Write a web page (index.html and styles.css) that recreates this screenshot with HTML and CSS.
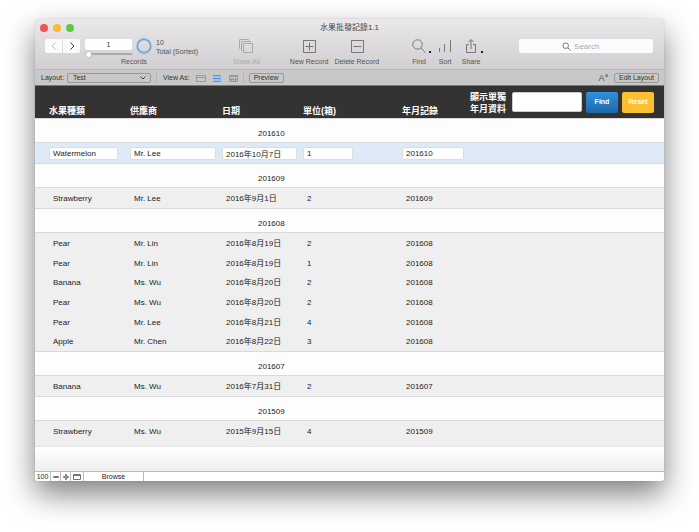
FILE: index.html
```html
<!DOCTYPE html>
<html lang="zh-Hant">
<head>
  <meta charset="UTF-8" />
  <meta name="viewport" content="width=device-width, initial-scale=1.0" />
  <title>水果批發記錄1.1</title>
  <link rel="stylesheet" href="styles.css">
</head>
<body>
  <div class="window">
    <header class="chrome">
      <div class="titlebar">
        <div class="lights">
          <button class="light close" aria-label="Close"></button>
          <button class="light minimize" aria-label="Minimize"></button>
          <button class="light zoom" aria-label="Zoom"></button>
        </div>
        <h1>水果批發記錄1.1</h1>
      </div>

      <div class="toolbar">
        <div class="records">
          <div class="records-row">
            <div class="nav">
              <button class="prev" aria-label="Previous record" disabled>
                <svg width="8" height="10" viewBox="0 0 8 10"><path d="M5.500 1.500 2 5l3.500 3.500" /></svg>
              </button>
              <button aria-label="Next record">
                <svg width="8" height="10" viewBox="0 0 8 10"><path d="M2.500 1.500 6 5 2.500 8.500" /></svg>
              </button>
            </div>
            <div class="position">
              <input type="text" class="current" value="1" aria-label="Current record" />
              <input type="range" class="slider" min="1" max="10" value="1" aria-label="Record slider" />
            </div>
            <svg class="pie" width="16" height="16" viewBox="0 0 16 16"><circle cx="8" cy="8" r="6.700" /></svg>
            <div class="count">10<br>Total (Sorted)</div>
          </div>
          <div class="caption">Records</div>
        </div>

        <button class="tool show-all" disabled>
          <svg width="16" height="16" viewBox="0 0 16 16">
            <path d="M2.500 10.500h-1v-9h9v1M4.500 12.500h-1v-9h9v1M5.500 5.500h9v9h-9z" />
          </svg>
          Show All
        </button>

        <div class="tool-group edit">
          <button class="tool">
            <svg width="16" height="16" viewBox="0 0 16 16"><path d="M2.500 2.500h12v12h-12zM8.500 4.500v8M4.500 8.500h8" /></svg>
            New Record
          </button>
          <button class="tool">
            <svg width="16" height="16" viewBox="0 0 16 16"><path d="M2.500 2.500h12v12h-12zM4.500 8.500h8" /></svg>
            Delete Record
          </button>
        </div>

        <div class="tool-group actions">
          <button class="tool">
            <svg width="24" height="16" viewBox="0 0 24 16">
              <circle cx="10.500" cy="6.500" r="4.700" /><path d="M14 10l4.500 4.500" /><path class="dot" d="M22 13h2v2h-2z" />
            </svg>
            Find
          </button>
          <button class="tool">
            <svg width="16" height="16" viewBox="0 0 16 16"><path d="M2.500 10v4M7.500 6v8M13.500 2v12" /></svg>
            Sort
          </button>
          <button class="tool">
            <svg width="24" height="16" viewBox="0 0 24 16">
              <path d="M10 6.500H7.500v8h9v-8H14M12 11V2M9.500 4 12 1.500 14.500 4" /><path class="dot" d="M22 13h2v2h-2z" />
            </svg>
            Share
          </button>
        </div>

        <label class="search">
          <svg width="9" height="9" viewBox="0 0 9 9"><circle cx="3.700" cy="3.700" r="2.800" /><path d="M5.800 5.800 8.500 8.500" /></svg>
          <input type="search" placeholder="Search" aria-label="Search" />
        </label>
      </div>
    </header>

    <div class="layout-bar">
      <label for="layout">Layout:</label>
      <div class="select">
        <select id="layout"><option>Test</option></select>
        <svg width="6" height="4" viewBox="0 0 6 4"><path d="M.5.5 3 3 5.500.5" /></svg>
      </div>
      <div class="views">
        <span>View As:</span>
        <button aria-label="Form view">
          <svg width="10" height="8" viewBox="0 0 10 8"><path d="M.5 1.500h9v6h-9zM.5 3.500h9" /></svg>
        </button>
        <button class="active" aria-label="List view">
          <svg width="10" height="8" viewBox="0 0 10 8"><path class="soft" d="M1 4.500h8" /><path d="M1 1.500h8M1 4.500h8M1 7.500h8" /></svg>
        </button>
        <button aria-label="Table view">
          <svg width="10" height="8" viewBox="0 0 10 8"><path d="M1.500 1.500h8v6h-8zM1 2.500h8M3.500 4v3M5.500 4v3M7.500 4v3M2 5.500h7" /></svg>
        </button>
      </div>
      <button class="pill">Preview</button>
      <button class="format" aria-label="Formatting bar">A<sup>a</sup></button>
      <button class="pill">Edit Layout</button>
    </div>

    <main>
      <table>
        <colgroup>
          <col class="col-fruit"><col class="col-vendor"><col class="col-date"><col class="col-units"><col class="col-month"><col>
        </colgroup>
        <thead>
          <tr>
            <th>水果種類</th>
            <th>供應商</th>
            <th>日期</th>
            <th>單位(箱)</th>
            <th>年月記錄</th>
            <td>
              <form class="filter">
                <label for="month">顯示單獨<br>年月資料</label>
                <input type="text" id="month" />
                <button type="button" class="find">Find</button>
                <button type="reset" class="reset">Reset</button>
              </form>
            </td>
          </tr>
        </thead>
        <tbody>
          <tr class="group"><td colspan="2"></td><th colspan="4">201610</th></tr>
          <tr class="selected">
            <td><input type="text" value="Watermelon" aria-label="水果種類" /></td>
            <td><input type="text" value="Mr. Lee" aria-label="供應商" /></td>
            <td><input type="text" value="2016年10月7日" aria-label="日期" /></td>
            <td><input type="text" value="1" aria-label="單位(箱)" /></td>
            <td><input type="text" value="201610" aria-label="年月記錄" /></td>
            <td></td>
          </tr>
        </tbody>
        <tbody>
          <tr class="group"><td colspan="2"></td><th colspan="4">201609</th></tr>
          <tr><td>Strawberry</td><td>Mr. Lee</td><td>2016年9月1日</td><td>2</td><td>201609</td><td></td></tr>
        </tbody>
        <tbody>
          <tr class="group"><td colspan="2"></td><th colspan="4">201608</th></tr>
          <tr><td>Pear</td><td>Mr. Lin</td><td>2016年8月19日</td><td>2</td><td>201608</td><td></td></tr>
          <tr><td>Pear</td><td>Mr. Lin</td><td>2016年8月19日</td><td>1</td><td>201608</td><td></td></tr>
          <tr><td>Banana</td><td>Ms. Wu</td><td>2016年8月20日</td><td>2</td><td>201608</td><td></td></tr>
          <tr><td>Pear</td><td>Ms. Wu</td><td>2016年8月20日</td><td>2</td><td>201608</td><td></td></tr>
          <tr><td>Pear</td><td>Mr. Lee</td><td>2016年8月21日</td><td>4</td><td>201608</td><td></td></tr>
          <tr><td>Apple</td><td>Mr. Chen</td><td>2016年8月22日</td><td>3</td><td>201608</td><td></td></tr>
        </tbody>
        <tbody>
          <tr class="group"><td colspan="2"></td><th colspan="4">201607</th></tr>
          <tr><td>Banana</td><td>Ms. Wu</td><td>2016年7月31日</td><td>2</td><td>201607</td><td></td></tr>
        </tbody>
        <tbody>
          <tr class="group"><td colspan="2"></td><th colspan="4">201509</th></tr>
          <tr><td>Strawberry</td><td>Ms. Wu</td><td>2015年9月15日</td><td>4</td><td>201509</td><td></td></tr>
        </tbody>
      </table>
      <div class="summary"></div>
    </main>

    <footer class="status">
      <span class="percent">100</span>
      <button aria-label="Zoom out"><svg width="8" height="8" viewBox="0 0 8 8"><path d="M1.500 3.500h5v1h-5z" /></svg></button>
      <button aria-label="Zoom in"><svg width="8" height="8" viewBox="0 0 8 8"><path d="M3.500 1.500h1v2h2v1h-2v2h-1v-2h-2v-1h2z" /></svg></button>
      <button class="wide" aria-label="Toggle toolbar"><svg width="8" height="8" viewBox="0 0 8 8"><path d="M.5 1.500h7v5h-7zM.5 2.500h7" /></svg></button>
      <button class="mode">Browse</button>
    </footer>
  </div>
</body>
</html>
```

FILE: styles.css
```css
* {
  box-sizing: border-box;
}

body {
  margin: 0;
  padding: 19px 35px 51px;
  min-height: 100vh;
  display: flex;
  background: #fff;
  font-family: "Liberation Sans", "Noto Sans CJK TC", sans-serif;
  font-size: 8px;
  color: #222;
}

button, input, select {
  margin: 0;
  padding: 0;
  border: none;
  background: none;
  font: inherit;
  color: inherit;
}

svg {
  display: block;
  flex: none;
  fill: none;
  stroke: #777;
}

.window {
  flex: 1;
  min-width: 0;
  display: flex;
  flex-direction: column;
  border-radius: 4px 4px 2px 2px;
  overflow: hidden;
  background: #fff;
  box-shadow: 0 0 1px rgba(0, 0, 0, 0.4), 0 13px 30px rgba(0, 0, 0, 0.5);
}

/* title bar and toolbar */
.chrome {
  background: linear-gradient(#eae8ea, #d0ced0);
  border-bottom: 1px solid #b9b8b9;
}

.titlebar {
  height: 17px;
  display: grid;
  grid-template-columns: 1fr auto 1fr;
  align-items: center;
}

.titlebar h1 {
  margin: 0;
  font-size: 8px;
  line-height: 12px;
  font-weight: normal;
  color: #444;
}

.lights {
  display: flex;
  gap: 5px;
  padding-left: 5px;
}

.light {
  width: 8px;
  height: 8px;
  border-radius: 50%;
}

.close { background: #f0564e; }
.minimize { background: #f8bb31; }
.zoom { background: #5dc93f; }

.toolbar {
  height: 33px;
  display: flex;
  align-items: flex-start;
  padding: 2px 11px 0 10px;
  font-size: 7px;
  line-height: 8px;
  color: #555;
}

.records {
  width: 178px;
}

.records-row {
  display: flex;
  height: 20px;
}

.caption {
  text-align: center;
}

.nav {
  display: flex;
  gap: 1px;
  margin-top: 1px;
  height: 14px;
}

.nav button {
  width: 17px;
  display: grid;
  place-items: center;
  background: #fbfbfb;
  border-radius: 0 2px 2px 0;
}

.nav .prev {
  border-radius: 2px 0 0 2px;
}

.nav svg {
  stroke: #444;
}

.nav .prev svg {
  stroke: #bbb;
}

.position {
  width: 47px;
  margin: 1px 4px 0 5px;
  display: flex;
  flex-direction: column;
}

.current {
  width: 100%;
  height: 11px;
  border-radius: 2px;
  background: #fff;
  text-align: center;
  color: #333;
}

.slider {
  appearance: none;
  width: 100%;
  height: 8px;
}

.slider::-webkit-slider-runnable-track {
  height: 2px;
  background: #aaa;
}

.slider::-webkit-slider-thumb {
  appearance: none;
  width: 7px;
  height: 7px;
  margin-top: -2px;
  border-radius: 50%;
  border: 1px solid #bbb;
  background: #fff;
}

.pie {
  stroke: #78aae0;
  stroke-width: 2;
}

.count {
  margin-left: 4px;
  line-height: 9px;
  white-space: nowrap;
}

.tool {
  display: flex;
  flex-direction: column;
  align-items: center;
  gap: 4px;
  line-height: 8px;
  white-space: nowrap;
}

.show-all {
  margin-left: 10px;
  color: #aaa;
}

.show-all svg {
  stroke: #aaa;
}

.tool-group {
  display: flex;
}

.edit {
  gap: 6px;
  margin-left: 30px;
}

.actions {
  gap: 6px;
  margin-left: 28px;
}

.dot {
  fill: #222;
  stroke: none;
}

.search {
  flex: 1;
  min-width: 0;
  height: 14px;
  margin: 1px 0 0 36px;
  display: flex;
  align-items: center;
  justify-content: center;
  gap: 3px;
  border-radius: 2px;
  background: #fbfbfb;
}

.search input {
  width: 36px;
  font-size: 8px;
  appearance: none;
  outline: none;
}

.search input::-webkit-search-cancel-button {
  display: none;
}

.search input::placeholder {
  color: #aaa;
}

/* layout bar */
.layout-bar {
  height: 16px;
  display: flex;
  align-items: center;
  padding: 0 5px 0 6px;
  background: #c9c8c9;
  border-bottom: 1px solid #777;
  font-size: 7px;
  color: #333;
}

.select {
  width: 84px;
  height: 10px;
  margin-left: 3px;
  padding: 0 4px 0 5px;
  display: flex;
  align-items: center;
  border: 1px solid #999;
  border-radius: 2px;
}

.select select {
  flex: 1;
  appearance: none;
}

.select svg {
  stroke: #444;
}

.views {
  height: 12px;
  margin: 0 5px;
  padding: 0 5px 0 6px;
  display: flex;
  align-items: center;
  gap: 6px;
  border-left: 1px solid #b8b8b8;
  border-right: 1px solid #b8b8b8;
}

.views svg {
  stroke: #999;
}

.views .active svg {
  stroke: #4f98e4;
}

.views .active .soft {
  stroke: #9cc3ee;
  stroke-width: 7;
}

.pill {
  height: 10px;
  padding: 0 4px;
  border: 1px solid #999;
  border-radius: 2px;
  line-height: 8px;
}

.format {
  margin-left: auto;
  margin-right: 6px;
  font-size: 9px;
  line-height: 10px;
  color: #555;
}

.format sup {
  font-size: 6px;
  line-height: 1px;
}

/* record list */
main {
  flex: 1;
  display: flex;
  flex-direction: column;
  background: #efefef;
}

table {
  width: 100%;
  table-layout: fixed;
  border-spacing: 0;
  line-height: 12px;
}

.col-fruit { width: 95px; }
.col-vendor { width: 92px; }
.col-date { width: 81px; }
.col-units { width: 99px; }
.col-month { width: 68px; }

th, td {
  height: 20px;
  padding: 1px 0 0 4px;
  text-align: left;
  font-weight: normal;
  white-space: nowrap;
}

tr > :first-child {
  padding-left: 18px;
}

thead th, thead td {
  height: 32px;
  padding: 0;
  background: #333;
  color: #fff;
  font-size: 9px;
  font-weight: bold;
}

thead th {
  padding-top: 18px;
}

thead th:first-child {
  padding-left: 14px;
}

.group td, .group th {
  height: 25px;
  padding-top: 7px;
  background: #fdfdfd;
  border-top: 1px solid #d9d9d9;
  border-bottom: 1px solid #d9d9d9;
}

.group th {
  padding-left: 36px;
}

/* every third record in a run closes up by a pixel */
tbody tr:nth-child(3n+4) td {
  height: 19px;
}

.selected td {
  padding: 0;
  background: #dfeaf8;
}

.selected td:first-child {
  padding-left: 14px;
}

.selected input {
  display: block;
  width: calc(100% - 6px);
  height: 13px;
  padding: 0 3px;
  border: 1px solid #ddd;
  border-radius: 2px;
  background: #fff;
}

.selected td:first-child input { width: calc(100% - 12px); }
.selected td:nth-child(4) input { width: 50px; }

.filter {
  display: flex;
  align-items: center;
  padding-right: 10px;
}

.filter label {
  width: 36px;
  margin-right: 6px;
  padding-top: 2px;
}

.filter input {
  flex: 1;
  min-width: 0;
  height: 20px;
  margin-right: 4px;
  padding: 0 4px;
  border: 1px solid #ccc;
  border-radius: 2px;
  background: #fff;
  color: #222;
}

.filter button {
  width: 32px;
  height: 21px;
  border-radius: 2px;
  font-size: 7px;
  font-weight: bold;
}

.find {
  background: linear-gradient(#2f92e2, #1f68a8);
}

.reset {
  margin-left: 4px;
  background: #fbc02f;
}

.summary {
  height: 26px;
  margin-top: auto;
  background: linear-gradient(#fff, #efefef);
  border-top: 1px solid #e4e4e4;
  border-bottom: 1px solid #bbb;
}

/* status bar */
.status {
  height: 9px;
  display: flex;
  font-size: 7px;
  line-height: 9px;
}

.status > * {
  width: 10px;
  display: grid;
  place-items: center;
  border-right: 1px solid #bbb;
}

.status .percent {
  width: 16px;
}

.status .wide {
  width: 13px;
}

.status .mode {
  width: 60px;
}
```
